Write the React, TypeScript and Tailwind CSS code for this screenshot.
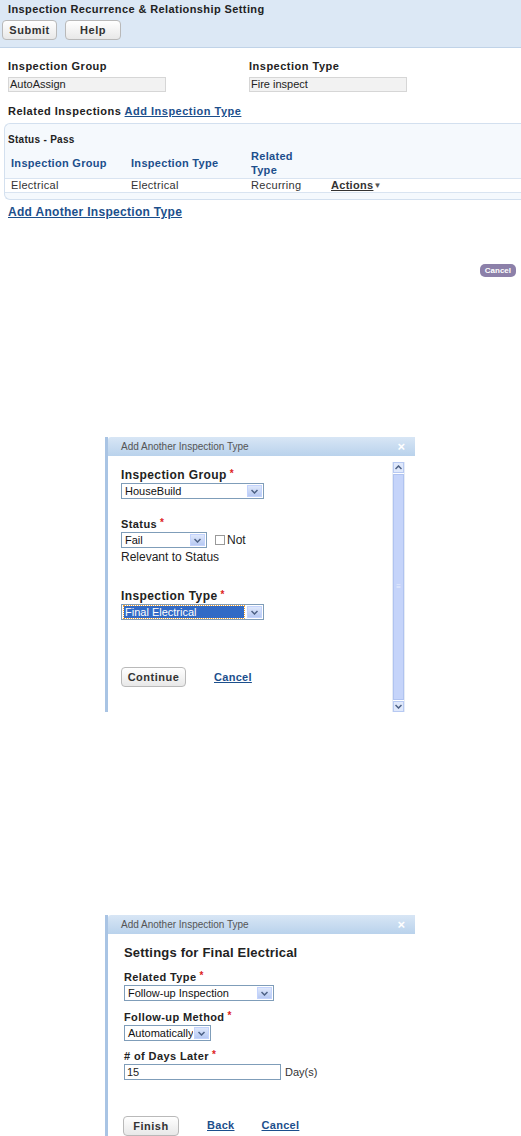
import React from 'react';

const font = { fontFamily: '"Liberation Sans", Arial, sans-serif' };

function Req() {
  return <span className="relative -top-[2px] text-[#d22] ml-[3px] text-[10px] leading-none">*</span>;
}

function Label({ children, className = '' }: { children: React.ReactNode; className?: string }) {
  return <div className={`text-[11px] leading-[15px] font-bold tracking-[0.4px] text-[#222] ${className}`}>{children}</div>;
}

function Select({ value, width, selected = false }: { value: string; width: string; selected?: boolean }) {
  return (
    <div className={`flex items-stretch h-[16px] border border-[#7f9db9] bg-white ${width}`}>
      <div className="flex-1 flex items-center px-[2px] overflow-hidden">
        <span
          className={`text-[11px] leading-[12px] px-[1px] whitespace-nowrap ${
            selected ? 'bg-[#316ac5] text-white outline-1 outline-dotted outline-[#f0a030] w-full' : 'text-[#111]'
          }`}
        >
          {value}
        </span>
      </div>
      <div className="w-[15px] m-[1px] bg-gradient-to-b from-[#dfe8fb] to-[#b7c9f2] border border-[#c3d3fd] flex items-center justify-center">
        <svg width="7" height="5" viewBox="0 0 7 5" aria-hidden>
          <path d="M0.5 1 L3.5 4 L6.5 1" stroke="#4d6185" strokeWidth="1.5" fill="none" />
        </svg>
      </div>
    </div>
  );
}

function DialogFrame({ children, height, scroll = false }: { children: React.ReactNode; height: string; scroll?: boolean }) {
  return (
    <div className={`ml-[105px] w-[310px] ${height} flex flex-col border-l-[3px] border-[#a9c4e4] bg-white`}>
      <div className="h-[19px] shrink-0 flex items-center justify-between pl-[13px] pr-[10px] bg-gradient-to-b from-[#d8e6f5] to-[#b9d2ec] rounded-tl-[3px]">
        <span className="text-[10px] text-[#555]">Add Another Inspection Type</span>
        <span className="text-white text-[13px] leading-none font-bold">×</span>
      </div>
      <div className="flex-1 flex min-h-0">
        <div className="flex-1 min-w-0">{children}</div>
        {scroll && (
          <div className="w-[13px] mr-[10px] mt-[6px] flex flex-col border-x border-[#e6ecf5]">
            <div className="h-[11px] bg-[#dfe8fb] border border-[#b7c9f2] flex items-center justify-center">
              <svg width="7" height="5" viewBox="0 0 7 5" aria-hidden>
                <path d="M0.5 4 L3.5 1 L6.5 4" stroke="#4d6185" strokeWidth="1.5" fill="none" />
              </svg>
            </div>
            <div className="flex-1 my-[1px] bg-[#c5d4fa] border border-[#b0c3f0] flex items-center justify-center">
              <span className="text-[8px] text-[#e8eefc] leading-none">≡</span>
            </div>
            <div className="h-[11px] bg-[#dfe8fb] border border-[#b7c9f2] flex items-center justify-center">
              <svg width="7" height="5" viewBox="0 0 7 5" aria-hidden>
                <path d="M0.5 1 L3.5 4 L6.5 1" stroke="#4d6185" strokeWidth="1.5" fill="none" />
              </svg>
            </div>
          </div>
        )}
      </div>
    </div>
  );
}

function GrayButton({ label, width }: { label: string; width: string }) {
  return (
    <button
      type="button"
      className={`${width} h-[20px] rounded-[4px] border border-[#b9b9b9] bg-gradient-to-b from-white to-[#e8e8e8] text-[11px] leading-[18px] font-bold text-[#333] tracking-[0.5px]`}
    >
      {label}
    </button>
  );
}

export default function App() {
  return (
    <div className="w-[521px] h-[1136px] bg-white overflow-hidden text-[#222]" style={font}>
      <div className="h-[48px] bg-[#dce8f5] border-b border-[#c0d3e8] pl-[8px] pt-[3px]">
        <h1 className="text-[11px] leading-[13px] font-bold text-[#222] tracking-[0.4px]">
          Inspection Recurrence &amp; Relationship Setting
        </h1>
        <div className="flex gap-[8px] mt-[4px] -ml-[6px]">
          <GrayButton label="Submit" width="w-[55px]" />
          <GrayButton label="Help" width="w-[56px]" />
        </div>
      </div>

      <div className="px-[8px] pt-[12px] flex">
        <div className="w-[241px]">
          <div className="text-[11px] leading-[13px] font-bold tracking-[0.5px]">Inspection Group</div>
          <div className="mt-[4px] w-[158px] h-[15px] bg-[#f2f2f2] border border-[#d6d6d6] text-[11px] leading-[13px] px-[1px]">
            AutoAssign
          </div>
        </div>
        <div>
          <div className="text-[11px] leading-[13px] font-bold tracking-[0.5px]">Inspection Type</div>
          <div className="mt-[4px] w-[158px] h-[15px] bg-[#f2f2f2] border border-[#d6d6d6] text-[11px] leading-[13px] px-[1px]">
            Fire inspect
          </div>
        </div>
      </div>

      <div className="px-[8px] mt-[13px] text-[11px] leading-[13px] font-bold tracking-[0.5px]">
        Related Inspections <span className="text-[#1c4f8c] underline">Add Inspection Type</span>
      </div>

      <div className="ml-[4px] mt-[5px] h-[77px] rounded-l-[6px] border border-r-0 border-[#d3e0ef] bg-[#f5f9fd] pt-[10px]">
        <div className="pl-[3px] text-[10px] leading-[12px] font-bold tracking-[0.3px]">Status - Pass</div>
        <div className="flex items-center h-[32px] pl-[6px] text-[11px] leading-[14px] font-bold text-[#1c4f8c] tracking-[0.3px]">
          <div className="w-[120px] pt-[2px]">Inspection Group</div>
          <div className="w-[120px] pt-[2px]">Inspection Type</div>
          <div className="w-[80px] pt-[2px]">
            Related
            <br />
            Type
          </div>
        </div>
        <div className="flex items-center h-[15px] pl-[6px] bg-white border-y border-[#d9e4f1] text-[11px] text-[#333] tracking-[0.3px]">
          <div className="w-[120px]">Electrical</div>
          <div className="w-[120px]">Electrical</div>
          <div className="w-[80px]">Recurring</div>
          <div className="font-bold text-[#333] flex items-center">
            <span className="underline">Actions</span>
            <span className="text-[8px] text-[#555]">▼</span>
          </div>
        </div>
      </div>

      <div className="px-[8px] mt-[5px] text-[12px] leading-[14px] font-bold text-[#1c4f8c] underline tracking-[0.3px]">
        Add Another Inspection Type
      </div>

      <div className="flex justify-end pr-[5px] mt-[45px]">
        <span className="h-[13px] px-[5px] rounded-[5px] bg-[#8c80a9] text-white text-[8px] font-bold leading-[13px]">Cancel</span>
      </div>

      <div className="h-[160px]" />

      <DialogFrame height="h-[275px]" scroll>
        <div className="pl-[13px] pt-[12px]">
          <Label className="text-[12px]">
            Inspection Group
            <Req />
          </Label>
          <Select value="HouseBuild" width="w-[143px]" />

          <Label className="mt-[18px]">
            Status
            <Req />
          </Label>
          <div className="flex items-center">
            <Select value="Fail" width="w-[86px]" />
            <span className="ml-[8px] w-[10px] h-[10px] border border-[#999] bg-white" />
            <span className="ml-[2px] text-[12px] leading-[14px]">Not</span>
          </div>
          <div className="mt-[2px] text-[12px] leading-[14px]">Relevant to Status</div>

          <Label className="mt-[25px] text-[12px]">
            Inspection Type
            <Req />
          </Label>
          <Select value="Final Electrical" width="w-[143px]" selected />

          <div className="mt-[47px] flex items-center">
            <GrayButton label="Continue" width="w-[65px]" />
            <span className="ml-[28px] text-[11px] font-bold text-[#1c4f8c] underline tracking-[0.3px]">Cancel</span>
          </div>
        </div>
      </DialogFrame>

      <div className="h-[203px]" />

      <DialogFrame height="h-[221px]">
        <div className="pl-[16px] pt-[11px]">
          <div className="text-[13px] leading-[16px] font-bold tracking-[0.2px] text-[#222]">Settings for Final Electrical</div>
          <Label className="mt-[9px]">
            Related Type
            <Req />
          </Label>
          <Select value="Follow-up Inspection" width="w-[150px]" />
          <Label className="mt-[9px]">
            Follow-up Method
            <Req />
          </Label>
          <Select value="Automatically" width="w-[87px]" />
          <Label className="mt-[8px]">
            # of Days Later
            <Req />
          </Label>
          <div className="flex items-center">
            <div className="w-[157px] h-[16px] border border-[#7f9db9] text-[11px] leading-[14px] px-[2px]">15</div>
            <span className="ml-[4px] text-[11px] text-[#333]">Day(s)</span>
          </div>
          <div className="mt-[35px] flex items-center -ml-[1px]">
            <GrayButton label="Finish" width="w-[56px]" />
            <span className="ml-[28px] text-[11px] font-bold text-[#1c4f8c] underline tracking-[0.3px]">Back</span>
            <span className="ml-[27px] text-[11px] font-bold text-[#1c4f8c] underline tracking-[0.3px]">Cancel</span>
          </div>
        </div>
      </DialogFrame>
    </div>
  );
}
